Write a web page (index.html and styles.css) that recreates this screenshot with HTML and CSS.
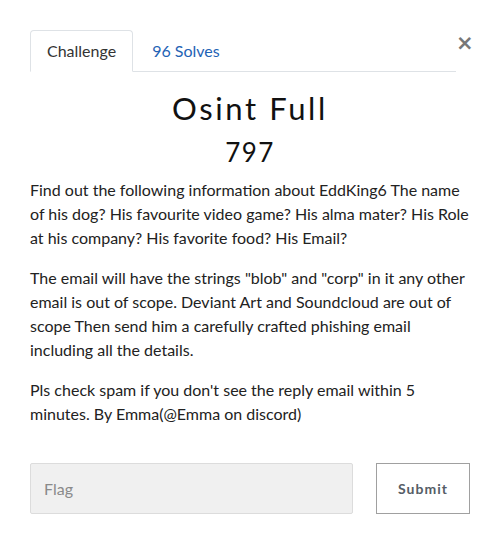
FILE: index.html
```html
<!DOCTYPE html>
<html>
<head>
<meta charset="utf-8">
<link rel="stylesheet" href="styles.css">
</head>
<body>
<div class="modal">
  <div class="header">
    <ul class="tabs">
      <li class="tab active">Challenge</li>
      <li class="tab link">96 Solves</li>
    </ul>
    <button class="close">&times;</button>
  </div>
  <h2 class="title">Osint Full</h2>
  <h3 class="points">797</h3>
  <div class="desc">
    <p>Find out the following information about EddKing6 The name of his dog? His favourite video game? His alma mater? His Role at his company? His favorite food? His Email?</p>
    <p>The email will have the strings "blob" and "corp" in it any other email is out of scope. Deviant Art and Soundcloud are out of scope Then send him a carefully crafted phishing email including all the details.</p>
    <p>Pls check spam if you don't see the reply email within 5 minutes. By Emma(@Emma on discord)</p>
  </div>
  <form class="flag-form">
    <input class="flag" type="text" placeholder="Flag">
    <button type="button" class="submit">Submit</button>
  </form>
</div>
</body>
</html>
```

FILE: styles.css
```css
html, body {
  margin: 0;
  padding: 0;
  background: #fff;
}
body {
  font-family: Lato, "Liberation Sans", sans-serif;
  color: #212529;
}
.modal {
  width: 440px;
  padding: 30px 30px 0 30px;
}
.header {
  display: flex;
  align-items: flex-start;
}
.tabs {
  flex: 0 0 426px;
  display: flex;
  list-style: none;
  margin: 0;
  padding: 0;
  border-bottom: 1px solid #dee2e6;
}
.tab {
  font-size: 16px;
  line-height: 24px;
  padding: 8px 16px;
  margin-bottom: -1px;
  border: 1px solid transparent;
  border-radius: 4px 4px 0 0;
}
.tab.active {
  border-color: #dee2e6 #dee2e6 #fff;
  color: #333;
}
.tab.link {
  color: #1f63b5;
  padding-left: 18px;
}
.close {
  margin-left: auto;
  margin-top: 2px;
  margin-right: 1px;
  background: none;
  border: none;
  padding: 0;
  font-family: "DejaVu Sans", sans-serif;
  font-size: 21px;
  font-weight: bold;
  line-height: 22px;
  color: #777;
}
.title {
  margin: 16px 0 0 0;
  text-align: center;
  font-weight: 400;
  font-size: 31px;
  line-height: 40px;
  letter-spacing: 2.6px;
  color: #111;
}
.points {
  margin: 6px 0 0 0;
  text-align: center;
  font-weight: 400;
  font-size: 26px;
  line-height: 36px;
  letter-spacing: 1.5px;
  color: #111;
}
.desc {
  margin-top: 8px;
  font-size: 16px;
  line-height: 24px;
  color: #222;
}
.desc p {
  margin: 0 0 16px 0;
}
.flag-form {
  display: flex;
  justify-content: space-between;
  margin-top: 37px;
}
.flag {
  box-sizing: border-box;
  width: 323px;
  height: 51px;
  background: #f0f0f0;
  border: 1px solid #dcdcdc;
  border-radius: 2px;
  padding: 0 13px;
  font-family: Lato, sans-serif;
  font-size: 16px;
}
.flag::placeholder {
  color: #8a8a8a;
}
.submit {
  box-sizing: border-box;
  width: 94px;
  height: 51px;
  background: #fff;
  border: 1px solid #a0a0a0;
  border-radius: 0;
  font-family: Lato, sans-serif;
  font-weight: 700;
  font-size: 14px;
  letter-spacing: 1px;
  color: #555d66;
}
```
